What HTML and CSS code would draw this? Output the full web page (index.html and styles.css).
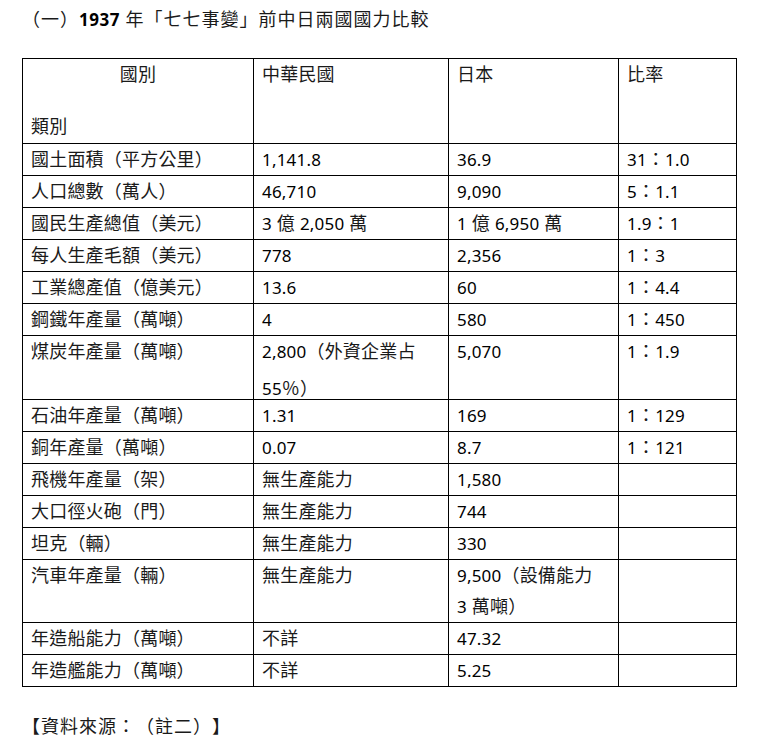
FILE: index.html
```html
<!DOCTYPE html>
<html lang="zh-Hant">
<head>
<meta charset="utf-8">
<title>1937年七七事變前中日兩國國力比較</title>
<link rel="stylesheet" href="styles.css">
</head>
<body>
<div class="page">
  <p class="title">（一）<span class="n b">1937</span> 年「七七事變」前中日兩國國力比較</p>
  <table class="cmp">
    <colgroup>
      <col class="c1"><col class="c2"><col class="c3"><col class="c4">
    </colgroup>
    <tr class="head">
      <td><div class="hc">國別</div><div class="hl">類別</div></td>
      <td>中華民國</td>
      <td>日本</td>
      <td>比率</td>
    </tr>
    <tr><td>國土面積（平方公里）</td><td><span class="n">1,141.8</span></td><td><span class="n">36.9</span></td><td><span class="n">31</span>：<span class="n">1.0</span></td></tr>
    <tr><td>人口總數（萬人）</td><td><span class="n">46,710</span></td><td><span class="n">9,090</span></td><td><span class="n">5</span>：<span class="n">1.1</span></td></tr>
    <tr><td>國民生產總值（美元）</td><td><span class="n">3</span> 億 <span class="n">2,050</span> 萬</td><td><span class="n">1</span> 億 <span class="n">6,950</span> 萬</td><td><span class="n">1.9</span>：<span class="n">1</span></td></tr>
    <tr><td>每人生產毛額（美元）</td><td><span class="n">778</span></td><td><span class="n">2,356</span></td><td><span class="n">1</span>：<span class="n">3</span></td></tr>
    <tr><td>工業總產值（億美元）</td><td><span class="n">13.6</span></td><td><span class="n">60</span></td><td><span class="n">1</span>：<span class="n">4.4</span></td></tr>
    <tr><td>鋼鐵年產量（萬噸）</td><td><span class="n">4</span></td><td><span class="n">580</span></td><td><span class="n">1</span>：<span class="n">450</span></td></tr>
    <tr><td>煤炭年產量（萬噸）</td><td><div><span class="n">2,800</span>（外資企業占</div><div class="low"><span class="n">55</span>％）</div></td><td><span class="n">5,070</span></td><td><span class="n">1</span>：<span class="n">1.9</span></td></tr>
    <tr><td>石油年產量（萬噸）</td><td><span class="n">1.31</span></td><td><span class="n">169</span></td><td><span class="n">1</span>：<span class="n">129</span></td></tr>
    <tr><td>銅年產量（萬噸）</td><td><span class="n">0.07</span></td><td><span class="n">8.7</span></td><td><span class="n">1</span>：<span class="n">121</span></td></tr>
    <tr><td>飛機年產量（架）</td><td>無生產能力</td><td><span class="n">1,580</span></td><td></td></tr>
    <tr><td>大口徑火砲（門）</td><td>無生產能力</td><td><span class="n">744</span></td><td></td></tr>
    <tr><td>坦克（輛）</td><td>無生產能力</td><td><span class="n">330</span></td><td></td></tr>
    <tr><td>汽車年產量（輛）</td><td>無生產能力</td><td><div><span class="n">9,500</span>（設備能力</div><div><span class="n">3</span> 萬噸）</div></td><td></td></tr>
    <tr><td>年造船能力（萬噸）</td><td>不詳</td><td><span class="n">47.32</span></td><td></td></tr>
    <tr><td>年造艦能力（萬噸）</td><td>不詳</td><td><span class="n">5.25</span></td><td></td></tr>
  </table>
  <p class="source">【資料來源：（註二）】</p>
</div>
</body>
</html>
```
FILE: styles.css
```css
html, body {
  margin: 0;
  padding: 0;
  background: #fff;
}
body {
  font-family: "Noto Sans", "Noto Sans CJK TC", sans-serif;
  font-size: 18px;
  color: #1a1a1a;
  text-spacing-trim: space-all;
}
.page {
  padding: 4px 0 0 22px;
}
.title {
  margin: 0;
  line-height: 31px;
  height: 31px;
  letter-spacing: 1px;
}
.n {
  font-size: 17px;
  line-height: 20px;
  color: #000;
}
.b {
  font-weight: bold;
  letter-spacing: 0.5px;
}
.cmp {
  margin-top: 23px;
  border-collapse: collapse;
  table-layout: fixed;
  width: 714px;
}
.c1 { width: 231px; }
.c2 { width: 195px; }
.c3 { width: 170px; }
.c4 { width: 118px; }
.cmp td {
  border: 1px solid #000;
  padding: 0 8px;
  line-height: 31px;
  vertical-align: top;
  white-space: nowrap;
  letter-spacing: 0.2px;
}
.head td {
  height: 84px;
}
.hc {
  text-align: center;
}
.hl {
  margin-top: 21px;
}
.low {
  padding-top: 12px;
  line-height: 18px;
}
.source {
  margin: 24px 0 0 0;
  line-height: 31px;
  letter-spacing: 1px;
}
```
